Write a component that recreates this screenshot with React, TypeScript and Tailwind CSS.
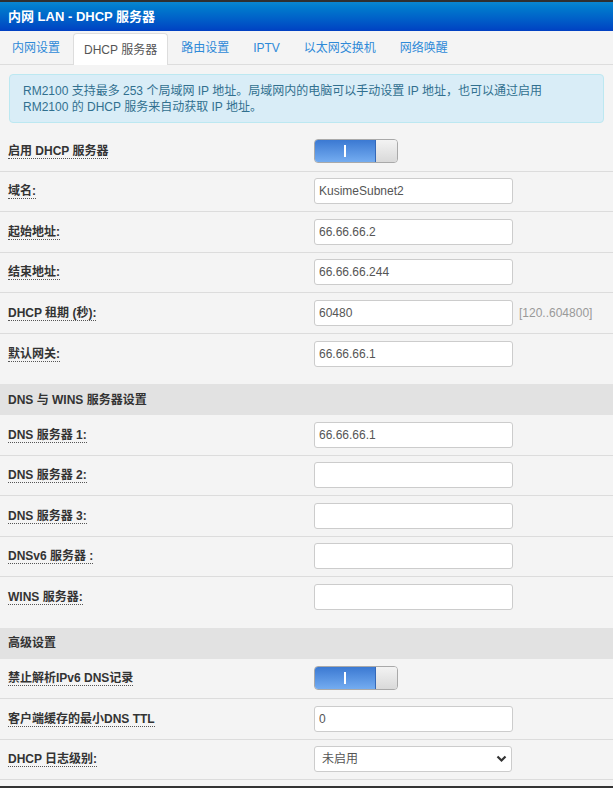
import { useState } from "react";

type Row =
  | { kind: "toggle"; label: string }
  | { kind: "input"; label: string; value: string; hint?: string }
  | { kind: "select"; label: string; value: string };

const basicRows: Row[] = [
  { kind: "toggle", label: "启用 DHCP 服务器" },
  { kind: "input", label: "域名:", value: "KusimeSubnet2" },
  { kind: "input", label: "起始地址:", value: "66.66.66.2" },
  { kind: "input", label: "结束地址:", value: "66.66.66.244" },
  { kind: "input", label: "DHCP 租期 (秒):", value: "60480", hint: "[120..604800]" },
  { kind: "input", label: "默认网关:", value: "66.66.66.1" },
];

const dnsRows: Row[] = [
  { kind: "input", label: "DNS 服务器 1:", value: "66.66.66.1" },
  { kind: "input", label: "DNS 服务器 2:", value: "" },
  { kind: "input", label: "DNS 服务器 3:", value: "" },
  { kind: "input", label: "DNSv6 服务器 :", value: "" },
  { kind: "input", label: "WINS 服务器:", value: "" },
];

const advRows: Row[] = [
  { kind: "toggle", label: "禁止解析IPv6 DNS记录" },
  { kind: "input", label: "客户端缓存的最小DNS TTL", value: "0" },
  { kind: "select", label: "DHCP 日志级别:", value: "未启用" },
];

const tabs = ["内网设置", "DHCP 服务器", "路由设置", "IPTV", "以太网交换机", "网络唤醒"];

function Toggle() {
  const [on, setOn] = useState(true);
  return (
    <button
      onClick={() => setOn(!on)}
      className="flex h-[24px] w-[84px] overflow-hidden rounded-[4px] border border-[#a9a9a9]"
    >
      <span className="flex h-full w-[61px] items-center justify-center bg-gradient-to-b from-[#3b79d2] to-[#74acf0] border-r border-[#3468b8]">
        {on && <span className="block h-[12px] w-[2px] bg-white" />}
      </span>
      <span className="h-full flex-1 bg-gradient-to-b from-[#f3f3f3] to-[#d9d9d9]" />
    </button>
  );
}

function FieldRow({ row, last }: { row: Row; last?: boolean }) {
  const [value, setValue] = useState(row.kind === "toggle" ? "" : row.value);
  return (
    <div
      className={
        last
          ? "flex h-[40.5px] items-center px-2"
          : "flex h-[40.5px] items-center border-b border-[#dcdcdc] px-2"
      }
    >
      <div className="w-[306px]">
        <span className="border-b border-dotted border-[#555] font-bold text-[#333]">{row.label}</span>
      </div>
      {row.kind === "toggle" && <Toggle />}
      {row.kind === "input" && (
        <>
          <input
            value={value}
            onChange={(e) => setValue(e.target.value)}
            className="h-[26px] w-[199px] rounded-[3px] border border-[#cccccc] bg-white px-[4px] text-[12px] text-[#555] outline-none"
          />
          {row.hint && <span className="ml-[6px] text-[#999]">{row.hint}</span>}
        </>
      )}
      {row.kind === "select" && (
        <div className="relative">
          <select
            value={value}
            onChange={(e) => setValue(e.target.value)}
            className="h-[26px] w-[198px] appearance-none rounded-[3px] border border-[#cccccc] bg-white pl-[7px] text-[12px] text-[#555] outline-none"
          >
            <option>未启用</option>
            <option>1</option>
            <option>2</option>
          </select>
          <svg
            className="pointer-events-none absolute right-[5px] top-[8px]"
            width="11"
            height="9"
            viewBox="0 0 11 9"
            fill="none"
          >
            <path d="M1.5 2.5 L5.5 6.5 L9.5 2.5" stroke="#333" strokeWidth="2.2" />
          </svg>
        </div>
      )}
    </div>
  );
}

function SectionHeader({ title }: { title: string }) {
  return (
    <div className="mt-[10px] flex h-[31px] items-center bg-[#e2e2e2] px-2 font-bold text-[#333]">{title}</div>
  );
}

export default function App() {
  return (
    <div
      className="h-screen overflow-hidden bg-[#f4f4f4] text-[12px]"
      style={{ fontFamily: '"Liberation Sans", Arial, "Noto Sans CJK SC", sans-serif' }}
    >
      <div className="h-[2px] bg-[#2f2f2f]" />
      <div className="flex h-[29px] items-center bg-gradient-to-b from-[#0b86cf] to-[#0240c2] px-2 text-[13px] font-bold text-white">
        内网 LAN - DHCP 服务器
      </div>

      {/* Tabs */}
      <div className="flex h-[34px] items-end border-b border-[#dddddd] pl-px">
        {tabs.map((t, i) => (
          <div
            key={t}
            className={
              i === 1
                ? "-mb-px mr-[2px] flex h-[32px] items-center rounded-t-[4px] border border-b-0 border-[#dddddd] bg-white px-[10px] text-[#555]"
                : "mr-[2px] flex h-[32px] items-center border border-transparent px-[10px] text-[#2f8ad8]"
            }
          >
            {t}
          </div>
        ))}
      </div>

      {/* Info */}
      <div className="mx-[9px] mt-[9px] mb-[8px] rounded-[4px] border border-[#bce8f1] bg-[#d9edf7] px-[13px] pt-[8px] pb-[7px] leading-4 text-[#31708f]">
        RM2100 支持最多 253 个局域网 IP 地址。局域网内的电脑可以手动设置 IP 地址，也可以通过启用
        <br />
        RM2100 的 DHCP 服务来自动获取 IP 地址。
      </div>

      <div>
        {basicRows.map((r, i) => (
          <FieldRow key={r.label} row={r} last={i === basicRows.length - 1} />
        ))}
      </div>

      <SectionHeader title="DNS 与 WINS 服务器设置" />
      <div>
        {dnsRows.map((r, i) => (
          <FieldRow key={r.label} row={r} last={i === dnsRows.length - 1} />
        ))}
      </div>

      <SectionHeader title="高级设置" />
      <div>
        {advRows.map((r) => (
          <FieldRow key={r.label} row={r} />
        ))}
      </div>

      <div className="mt-[6px] h-[10px] bg-[#333]" />
    </div>
  );
}
